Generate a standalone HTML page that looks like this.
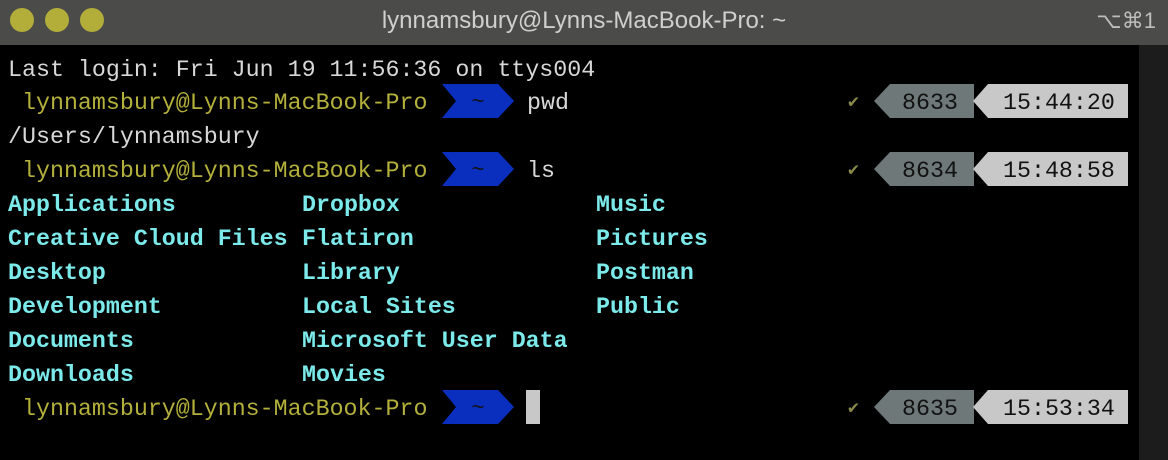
<!DOCTYPE html>
<html><head><style>
body{margin:0;width:1168px;height:460px;background:#000;overflow:hidden;position:relative;font-family:"Liberation Mono",monospace;}
.tb{position:absolute;left:0;top:0;width:1168px;height:45px;background:#4b4b49;}
.dot{position:absolute;top:8px;width:24px;height:24px;border-radius:50%;background:#b3ae3a;}
.title{position:absolute;left:0;width:1168px;top:7px;text-align:center;color:#cfcfcf;font:24px "Liberation Sans",sans-serif;}
.sc{position:absolute;right:12px;top:8px;color:#bdbdbd;font:22px "Liberation Sans","DejaVu Sans",sans-serif;}
.strip{position:absolute;left:1139px;top:45px;width:29px;height:415px;background:#1c1c1c;}
.row{position:absolute;height:34px;line-height:34px;font-size:23.3px;white-space:pre;}
.w{color:#d8d8d8}.y{color:#b4b03c}.c{color:#7ceaea;font-weight:bold}
svg{position:absolute}
</style></head><body>
<div class="tb"><div class="dot" style="left:10px"></div><div class="dot" style="left:45px"></div><div class="dot" style="left:80px"></div>
<div class="title">lynnamsbury@Lynns-MacBook-Pro: ~</div><div class="sc">⌥⌘1</div></div>
<div class="strip"></div>

<div class="row w" style="left:8px;top:53px">Last login: Fri Jun 19 11:56:36 on ttys004</div>
<div class="row w" style="left:8px;top:120px">/Users/lynnamsbury</div>

<div class="row c" style="left:8px;top:188px">Applications</div>
<div class="row c" style="left:8px;top:222px">Creative Cloud Files</div>
<div class="row c" style="left:8px;top:256px">Desktop</div>
<div class="row c" style="left:8px;top:290px">Development</div>
<div class="row c" style="left:8px;top:324px">Documents</div>
<div class="row c" style="left:8px;top:358px">Downloads</div>
<div class="row c" style="left:302px;top:188px">Dropbox</div>
<div class="row c" style="left:302px;top:222px">Flatiron</div>
<div class="row c" style="left:302px;top:256px">Library</div>
<div class="row c" style="left:302px;top:290px">Local Sites</div>
<div class="row c" style="left:302px;top:324px">Microsoft User Data</div>
<div class="row c" style="left:302px;top:358px">Movies</div>
<div class="row c" style="left:596px;top:188px">Music</div>
<div class="row c" style="left:596px;top:222px">Pictures</div>
<div class="row c" style="left:596px;top:256px">Postman</div>
<div class="row c" style="left:596px;top:290px">Public</div>

<div id="p"></div>
<script>
var tops=[84,152,390],cmds=["pwd","ls",""],nums=["8633","8634","8635"],times=["15:44:20","15:48:58","15:53:34"];
var h="";
for(var i=0;i<3;i++){var t=tops[i];
h+='<div class="row y" style="left:22px;top:'+(t+2)+'px">lynnamsbury@Lynns-MacBook-Pro</div>';
h+='<svg style="left:440px;top:'+t+'px" width="76" height="34"><polygon points="2,0 58,0 74,17 58,34 2,34 16,17" fill="#0a2fbf"/><text x="38" y="24" font-size="22" fill="#111" text-anchor="middle" font-family="Liberation Mono">~</text></svg>';
if(cmds[i])h+='<div class="row w" style="left:527px;top:'+(t+2)+'px">'+cmds[i]+'</div>';
else h+='<div style="position:absolute;left:526px;top:'+t+'px;width:14px;height:34px;background:#c8c8c8"></div>';
h+='<div class="row" style="left:848px;top:'+(t+2)+'px;color:#8a8a4a;font-size:18px">✔</div>';
h+='<svg style="left:874px;top:'+t+'px" width="254" height="34"><polygon points="0,17 16,0 100,0 100,34 16,34" fill="#6e7878"/><polygon points="114,0 254,0 254,34 114,34 99,17" fill="#c8c8c8"/></svg>';
h+='<div class="row" style="left:902px;top:'+(t+2)+'px;color:#111">'+nums[i]+'</div>';
h+='<div class="row" style="left:1003px;top:'+(t+2)+'px;color:#111">'+times[i]+'</div>';}
document.getElementById("p").innerHTML=h;
</script>
</body></html>
